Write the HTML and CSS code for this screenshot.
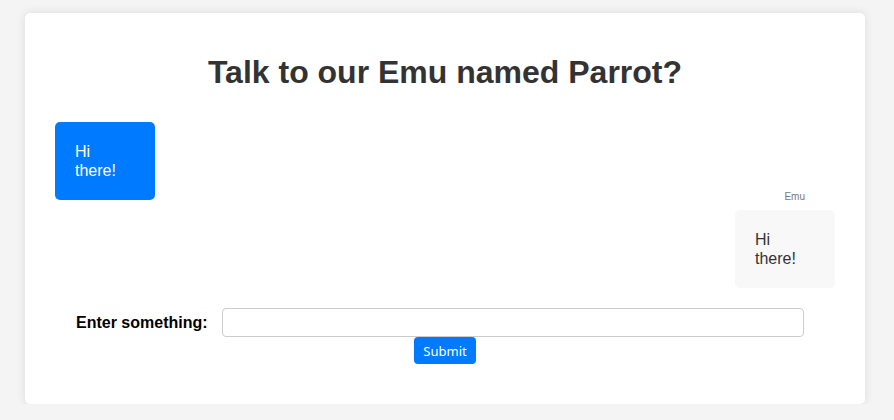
FILE: index.html
```html
<!DOCTYPE html>
<html lang="en">
<head>
<meta charset="utf-8">
<title>Talk to our Emu</title>
<link rel="stylesheet" href="styles.css">
</head>
<body>
  <div class="card">
    <h1 class="title">Talk to our Emu named Parrot?</h1>
    <div class="chat">
      <div class="msg msg-user">
        <div class="bubble bubble-user">Hi there!</div>
      </div>
      <div class="msg msg-bot">
        <span class="sender">Emu</span>
        <div class="bubble bubble-bot">Hi there!</div>
      </div>
    </div>
    <form class="form">
      <div class="row">
        <label class="label" for="q">Enter something:</label>
        <input class="input" id="q" type="text">
      </div>
      <button class="submit" type="button">Submit</button>
    </form>
  </div>
</body>
</html>
```
FILE: styles.css
```css
html, body {
  margin: 0;
  padding: 0;
}
body {
  background: #f4f4f4;
  font-family: "Liberation Sans", Arial, sans-serif;
  color: #333;
}
.card {
  box-sizing: border-box;
  width: 840px;
  margin: 13px 0 0 25px;
  padding: 20px 20px 20px;
  background: #fff;
  border-radius: 5px;
  box-shadow: 0 0 10px rgba(0, 0, 0, 0.1);
}
.title {
  font-size: 32px;
  font-weight: bold;
  text-align: center;
  color: #333;
  margin: 21px 0 21px;
}
.chat {
  padding: 10px;
  display: flex;
  flex-direction: column;
  gap: 10px;
}
.msg {
  display: flex;
  position: relative;
}
.msg-bot {
  justify-content: flex-end;
}
.bubble {
  box-sizing: border-box;
  width: 100px;
  padding: 20px;
  border-radius: 5px;
  font-size: 16px;
  line-height: 19px;
}
.bubble-user {
  background: #007bff;
  color: #fff;
}
.bubble-bot {
  background: #f8f8f8;
  color: #333;
}
.sender {
  position: absolute;
  top: -19px;
  right: 30px;
  font-size: 10px;
  color: #777;
}
.form {
  margin-top: 10px;
  padding-bottom: 20px;
  display: flex;
  flex-direction: column;
  align-items: center;
}
.row {
  align-self: stretch;
  display: flex;
  align-items: center;
  padding-left: 31px;
  gap: 14px;
}
.label {
  font-size: 16px;
  font-weight: bold;
  color: #000;
}
.input {
  box-sizing: border-box;
  width: 582px;
  height: 29px;
  margin: 0;
  border: 1px solid #ccc;
  border-radius: 4px;
  padding: 4px 8px;
}
.submit {
  box-sizing: border-box;
  height: 27px;
  width: 62px;
  margin: 0;
  padding: 0 8px;
  border: none;
  border-radius: 4px;
  background: #007bff;
  color: #fff;
  font-family: "Noto Sans", "Open Sans", sans-serif;
  font-size: 13px;
}
```
